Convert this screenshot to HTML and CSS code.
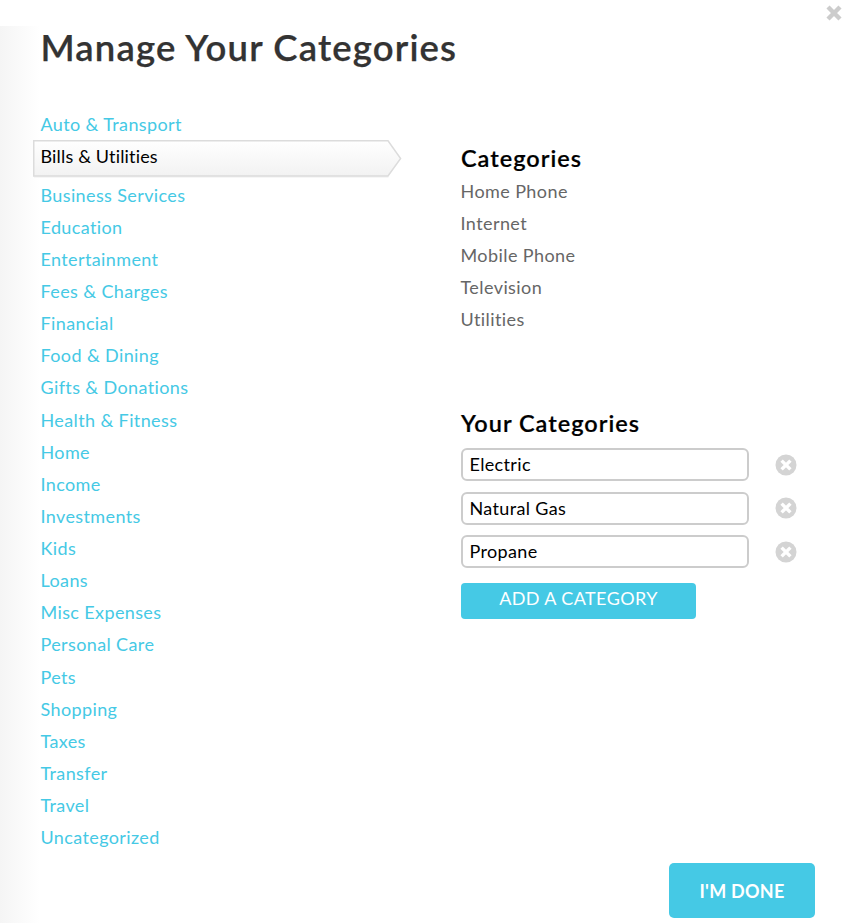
FILE: index.html
```html
<!DOCTYPE html>
<html lang="en">
<head>
<meta charset="utf-8">
<title>Manage Your Categories</title>
<link rel="stylesheet" href="styles.css">
</head>
<body>
<main class="dialog">
  <button class="close" aria-label="Close"><svg width="16" height="16" viewBox="0 0 16 16"><path d="M2 2 14 14M14 2 2 14"/></svg></button>
  <h1>Manage Your Categories</h1>
  <div class="columns">
    <ul class="groups">
      <li>Auto &amp; Transport</li>
      <li class="selected"><svg class="tab" width="369" height="38" viewBox="0 0 369 38"><defs><linearGradient id="g" x1="0" y1="0" x2="0" y2="1"><stop offset="0" stop-color="#fff"/><stop offset="1" stop-color="#f2f2f2"/></linearGradient></defs><path class="shade" d="M1 37H355.5"/><path class="face" fill="url(#g)" d="M.75 .75H355L367.6 18.5 355 36H.75Z"/></svg><span>Bills &amp; Utilities</span></li>
      <li>Business Services</li>
      <li>Education</li>
      <li>Entertainment</li>
      <li>Fees &amp; Charges</li>
      <li>Financial</li>
      <li>Food &amp; Dining</li>
      <li>Gifts &amp; Donations</li>
      <li>Health &amp; Fitness</li>
      <li>Home</li>
      <li>Income</li>
      <li>Investments</li>
      <li>Kids</li>
      <li>Loans</li>
      <li>Misc Expenses</li>
      <li>Personal Care</li>
      <li>Pets</li>
      <li>Shopping</li>
      <li>Taxes</li>
      <li>Transfer</li>
      <li>Travel</li>
      <li>Uncategorized</li>
    </ul>
    <div class="details">
      <h2>Categories</h2>
      <ul class="fixed">
        <li>Home Phone</li>
        <li>Internet</li>
        <li>Mobile Phone</li>
        <li>Television</li>
        <li>Utilities</li>
      </ul>
      <h2 class="own">Your Categories</h2>
      <div class="row"><input aria-label="Category" value="Electric"><svg class="remove" width="22" height="22" viewBox="0 0 22 22"><circle cx="11" cy="11" r="10.5"/><path d="M6.6 6.6 15.4 15.4M15.4 6.6 6.6 15.4"/></svg></div>
      <div class="row"><input aria-label="Category" value="Natural Gas"><svg class="remove" width="22" height="22" viewBox="0 0 22 22"><circle cx="11" cy="11" r="10.5"/><path d="M6.6 6.6 15.4 15.4M15.4 6.6 6.6 15.4"/></svg></div>
      <div class="row"><input aria-label="Category" value="Propane"><svg class="remove" width="22" height="22" viewBox="0 0 22 22"><circle cx="11" cy="11" r="10.5"/><path d="M6.6 6.6 15.4 15.4M15.4 6.6 6.6 15.4"/></svg></div>
      <button class="add">ADD A CATEGORY</button>
    </div>
  </div>
  <button class="done">I'M DONE</button>
</main>
</body>
</html>
```
FILE: styles.css
```css
* { box-sizing: border-box; }
body {
  margin: 0;
  background: #fff;
  font-family: Lato, "Liberation Sans", sans-serif;
  font-size: 18px;
}
.dialog {
  position: relative;
  height: 923px;
  padding: 26px 41px 0;
  background: linear-gradient(to right, #f5f5f5, #fff 40px) 0 26px no-repeat;
  overflow: hidden;
}
h1, h2, ul { margin: 0; padding: 0; list-style: none; }
h1 {
  height: 83px;
  margin-left: -.5px;
  font-size: 36.5px;
  line-height: 42px;
  font-weight: 600;
  letter-spacing: 1.15px;
  color: #333;
  -webkit-text-stroke: .25px #333;
}
button { border: 0; padding: 0; font-family: inherit; }
.close {
  position: absolute;
  top: 5px;
  right: 14px;
  width: 16px;
  height: 16px;
  background: none;
}
.close svg { display: block; }
.close path { stroke: #ccc; stroke-width: 4.4; }
.columns { display: flex; height: 754px; }
.groups { width: 420px; margin: -1px 0 0 -.5px; color: #45c9e5; letter-spacing: .38px; }
.groups li { line-height: 32.12px; }
.groups .selected {
  position: relative;
  height: 38.5px;
  color: #000;
  letter-spacing: .16px;
}
.selected span { position: relative; }
.tab { position: absolute; left: -7.5px; top: 0; }
.tab .face { stroke: #dcdcdc; stroke-width: 1.5; }
.tab .shade { stroke: #eee; stroke-width: 1; }
.details { padding-top: 33px; margin-left: .5px; }
h2 {
  font-size: 23.5px;
  line-height: 32px;
  font-weight: 600;
  letter-spacing: 1px;
  -webkit-text-stroke: .2px #000;
}
.own { height: 41px; }
.fixed { height: 233px; padding-top: 1px; margin-left: -.5px; color: #666; letter-spacing: .42px; }
.fixed li { line-height: 32px; }
.row { display: flex; align-items: center; height: 33px; margin-bottom: 10.5px; }
.row input {
  width: 288px;
  height: 33px;
  margin-right: 26px;
  padding: 0 6.5px 1px;
  border: 2px solid #ccc;
  border-radius: 6px;
  font: inherit;
  letter-spacing: .35px;
  color: #000;
  background: #fff;
}
.remove circle { fill: #d4d4d4; }
.remove path { stroke: #fff; stroke-width: 3.4; }
.add {
  display: block;
  width: 235px;
  height: 36px;
  margin-top: 15px;
  padding-bottom: 6px;
  border-radius: 4px;
  background: #45c9e5;
  color: #fff;
  font-size: 18px;
  font-weight: 400;
  letter-spacing: .4px;
}
.done {
  display: block;
  width: 146px;
  height: 55px;
  margin-left: 628px;
  padding-top: 1px;
  border-radius: 5px;
  background: #45c9e5;
  color: #fff;
  font-size: 18px;
  font-weight: 700;
  letter-spacing: .25px;
}
```
